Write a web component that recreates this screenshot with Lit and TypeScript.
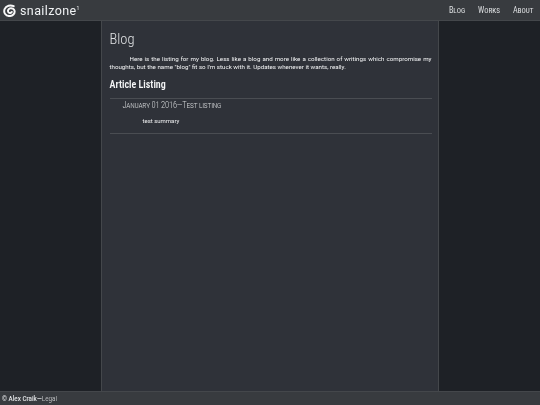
import { LitElement, html, css } from "lit";
import { customElement } from "lit/decorators.js";

@customElement("app-root")
export class AppRoot extends LitElement {
  static styles = css`
    :host { display: block; width: 540px; height: 405px; overflow: hidden; background: #1e2126; }
    .page { display: flex; flex-direction: column; width: 540px; height: 405px; font-family: Roboto, "Liberation Sans", sans-serif; color: #e0e0e0; filter: blur(0.2px); }
    .head { flex: none; height: 20px; display: flex; align-items: center; justify-content: space-between; background: #383b3f; border-bottom: 1px solid #44474b; padding: 0 6.5px 0 3px; }
    .brand { display: flex; align-items: center; gap: 4px; color: #f0f2f4; font-size: 12.5px; letter-spacing: 0.4px; }
    .brand sup { font-size: 5px; line-height: 0; vertical-align: 5px; }
    .brand svg { display: block; width: 13px; height: 13px; }
    nav { display: flex; gap: 13px; font-size: 8.2px; font-weight: 400; font-stretch: 75%; font-variant: small-caps; color: #dcdee0; }
    .mid { flex: 1; display: flex; justify-content: center; min-height: 0;
      background: radial-gradient(circle at 1px 1px, #25282d 0.5px, transparent 0.7px) 0 0 / 3px 3px, #1e2126; }
    main { width: 322px; padding: 10px 6.5px 0 7.5px; background: #2f3239; border-left: 1px solid #44474b; border-right: 1px solid #44474b; }
    h1 { margin: 0; font-size: 14.5px; line-height: 18px; font-weight: 300; font-stretch: 75%; color: #dfe1e3; }
    p.intro { margin: 6px 0 0; font-size: 6.2px; line-height: 8px; text-align: justify; text-indent: 20px; color: #f4f5f6; }
    h2 { margin: 7px 0 0; font-size: 10px; line-height: 14px; font-weight: 600; font-stretch: 75%; color: #f4f5f6; }
    .entry { margin-top: 6px; border-top: 1px solid #4a4d52; border-bottom: 1px solid #4a4d52; height: 34px; padding-left: 13px; }
    .entry .t { font-size: 8.5px; line-height: 12px; font-weight: 300; font-stretch: 75%; font-variant: small-caps; letter-spacing: -0.2px; color: #d4d6d8; }
    .entry .s { font-size: 6px; line-height: 8px; margin: 6px 0 0 20px; color: #f0f1f2; }
    footer { flex: none; height: 13px; background: #383b3f; border-top: 1px solid #44474b; display: flex; align-items: center; padding-left: 2px; font-size: 6.3px; font-weight: 500; color: #e2e4e6; }
    footer span { font-weight: 400; color: #b8babc; }
  `;
  render() {
    return html`
      <div class="page">
      <div class="head">
        <div class="brand">
          <svg viewBox="0 0 14 14" fill="none" stroke="#f8f8f8" stroke-width="2.1" stroke-linecap="round"><path d="M11.5 2.4 C8 .8 3.4 1.6 1.7 5.6 C.3 9.4 3 13 7 13 C10.5 13 12.9 10.4 12.5 7.5 C12.1 5.2 9.6 4 7.4 4.7 C5.4 5.4 4.8 7.6 6 9 C7 10 8.8 9.8 9.4 8.6"/></svg>
          <span>snailzone<sup>1</sup></span>
        </div>
        <nav><span>Blog</span><span>Works</span><span>About</span></nav>
      </div>
      <div class="mid">
        <main>
          <h1>Blog</h1>
          <p class="intro">Here is the listing for my blog. Less like a blog and more like a collection of writings which compromise my thoughts, but the name "blog" fit so I'm stuck with it. Updates whenever it wants, really.</p>
          <h2>Article Listing</h2>
          <div class="entry">
            <div class="t">January 01 2016—Test listing</div>
            <div class="s">test summary</div>
          </div>
        </main>
      </div>
      <footer><div>© Alex Craik—<span>Legal</span></div></footer>
      </div>
    `;
  }
}
